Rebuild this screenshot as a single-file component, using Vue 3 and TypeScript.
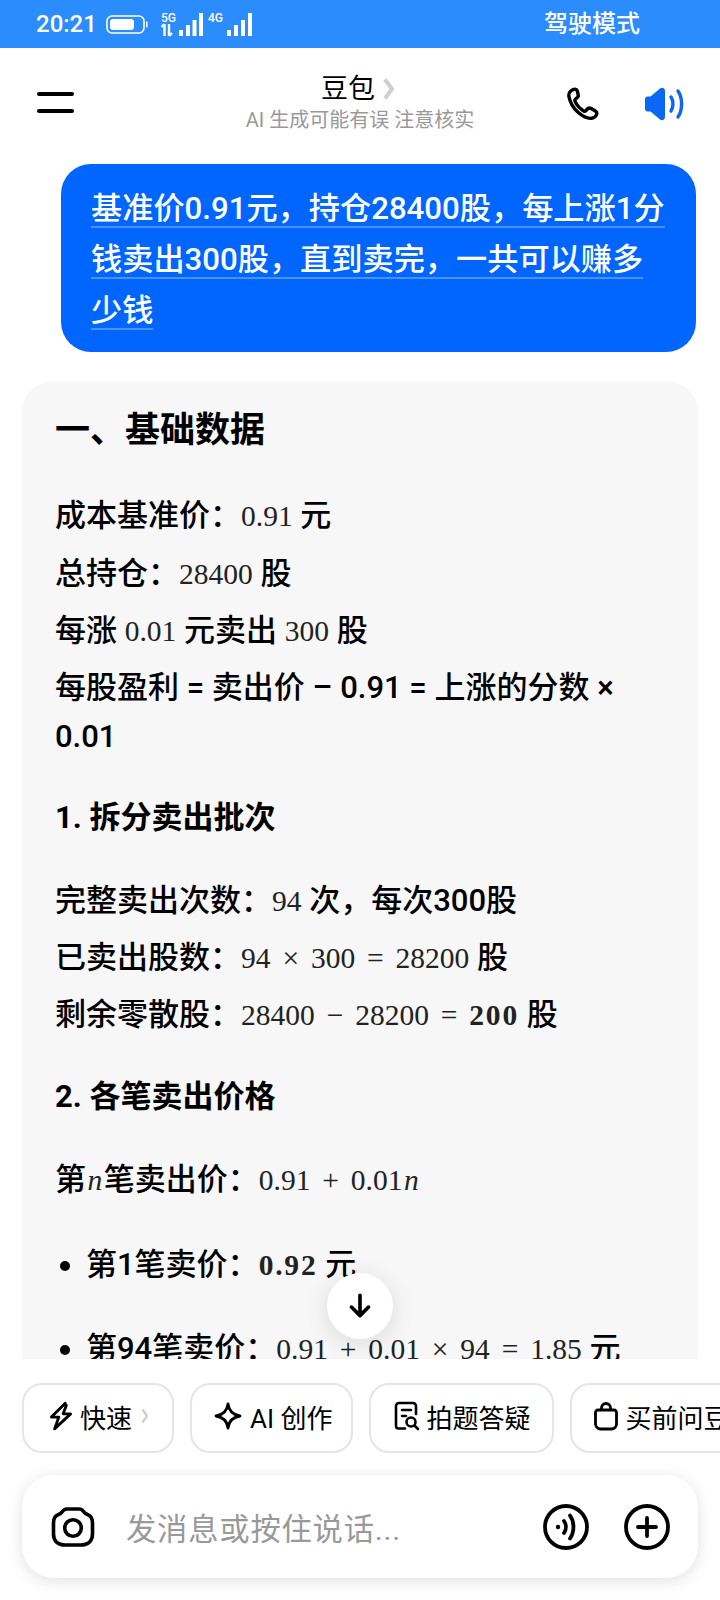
<script setup lang="ts">
interface Chip { label: string; icon: string; arrow?: boolean }
const chips: Chip[] = [
  { label: '快速', icon: 'bolt', arrow: true },
  { label: 'AI 创作', icon: 'star' },
  { label: '拍题答疑', icon: 'doc' },
  { label: '买前问豆包', icon: 'bag' },
]
</script>

<template>
  <div class="page">
    <div class="status">
      <span class="time">20:21</span>
      <svg class="battery" width="42" height="19" viewBox="0 0 42 19">
        <rect x="1" y="1" width="37" height="17" rx="5" fill="none" stroke="#fff" stroke-width="1.6" />
        <rect x="4" y="4" width="24" height="11" rx="3" fill="#fff" />
        <rect x="40" y="6.5" width="1.6" height="6" rx="0.8" fill="#fff" />
      </svg>
      <div class="sig">
        <span class="gen">5G</span>
        <svg width="46" height="24" viewBox="0 0 46 24">
          <path d="M3.500 11v12M3.500 11l-3 3M8 11v12M8 23l3-3" stroke="#fff" stroke-width="2.400" fill="none" />
          <rect x="18" y="17" width="4" height="6" fill="#fff" />
          <rect x="25" y="12" width="4" height="11" fill="#fff" />
          <rect x="31.500" y="7" width="4" height="16" fill="#fff" />
          <rect x="38" y="0" width="4" height="23" fill="#fff" />
        </svg>
      </div>
      <div class="sig sig2">
        <span class="gen">4G</span>
        <svg width="46" height="24" viewBox="0 0 46 24">
          <rect x="19" y="17" width="4" height="6" fill="#fff" />
          <rect x="26" y="12" width="4" height="11" fill="#fff" />
          <rect x="33" y="7" width="4" height="16" fill="#fff" />
          <rect x="40" y="0" width="4" height="23" fill="#fff" />
        </svg>
      </div>
      <span class="drive">驾驶模式</span>
    </div>

    <header class="head">
      <div class="burger"><i></i><i></i></div>
      <div class="title-box">
        <div class="title">豆包<svg width="12" height="24" viewBox="0 0 12 24"><path d="M2 2.500l7 9.500-7 9.500" fill="none" stroke="#cfcfcf" stroke-width="4" /></svg></div>
        <div class="sub">AI 生成可能有误 注意核实</div>
      </div>
      <div class="head-icons">
        <svg width="36" height="36" viewBox="0 0 24 24" fill="none" stroke="#000" stroke-width="2.300" stroke-linejoin="round">
          <path d="M6.500 2.200c-1.800.6-3.700 2.300-3.300 4.500.9 4.800 3.500 8.600 6.300 11 2.600 2.200 6.100 4.300 8.900 3.800 1.800-.3 3.300-1.800 3.500-3.200.1-.8-.3-1.300-1-1.700l-3.100-1.700c-.8-.4-1.400-.3-2 .3l-1.300 1.300c-.4.4-.9.400-1.400.1-2.600-1.600-4.700-4-5.800-6.500-.2-.5-.1-.9.300-1.300l1.300-1.100c.6-.5.800-1.100.5-1.900L8.900 3.300c-.4-1-1.300-1.400-2.400-1.100z" />
        </svg>
        <svg class="spk" width="44" height="36" viewBox="0 0 44 36" fill="#0b68f5">
          <path d="M2 13c0-1.500 1-2.500 2.500-2.500h3L17 2.500c2-1.600 5-.5 5 2.500v26c0 3-3 4-5 2.500l-9.500-8h-3C3 25.500 2 24.500 2 23z" />
          <path d="M28 11c2.600 4 2.600 10 0 14" fill="none" stroke="#0b68f5" stroke-width="3.400" stroke-linecap="round" />
          <path d="M35 5c4.800 7 4.800 19 0 26" fill="none" stroke="#0b68f5" stroke-width="3.400" stroke-linecap="round" />
        </svg>
      </div>
    </header>

    <main class="content">
      <div class="bubble"><span class="ul">基准价0.91元，持仓28400股，每上涨1分钱卖出300股，直到卖完，一共可以赚多少钱</span></div>
      <article class="card">
        <h2>一、基础数据</h2>
        <p class="line">成本基准价：<span class="m">0.91</span> 元</p>
        <p class="line tight">总持仓：<span class="m">28400</span> 股</p>
        <p class="line tight">每涨 <span class="m">0.01</span> 元卖出 <span class="m">300</span> 股</p>
        <p class="line">每股盈利 = 卖出价 – 0.91 = 上涨的分数 × 0.01</p>
        <h3>1. 拆分卖出批次</h3>
        <p class="line tight">完整卖出次数：<span class="m">94</span> 次，每次300股</p>
        <p class="line tight">已卖出股数：<span class="m">94 × 300 = 28200</span> 股</p>
        <p class="line">剩余零散股：<span class="m">28400 − 28200 = <b>200</b></span> 股</p>
        <h3 class="second">2. 各笔卖出价格</h3>
        <p class="line">第<span class="m"><i>n</i></span>笔卖出价：<span class="m">0.91 + 0.01<i>n</i></span></p>
        <ul>
          <li>第1笔卖价：<span class="m"><b>0.92</b></span> 元</li>
          <li>第94笔卖价：<span class="m">0.91 + 0.01 × 94 = 1.85</span> 元</li>
        </ul>
      </article>
      <button class="down" type="button" aria-label="scroll down">
        <svg width="30" height="30" viewBox="0 0 28 28" fill="none" stroke="#000" stroke-width="3.400" stroke-linecap="round" stroke-linejoin="round">
          <path d="M14 4v19M6 15l8 8 8-8" />
        </svg>
      </button>
    </main>

    <div class="chips">
      <div v-for="c in chips" :key="c.label" class="chip" :class="c.icon">
        <svg v-if="c.icon === 'bolt'" width="24" height="30" viewBox="1 1 22 28" fill="none" stroke="#000" stroke-width="2.600" stroke-linejoin="round" stroke-linecap="round">
          <path d="M16 3L3 16h7l-4 11 15-14h-7l3-8" />
        </svg>
        <svg v-else-if="c.icon === 'star'" width="30" height="30" viewBox="0 0 30 30" fill="none" stroke="#000" stroke-width="2.800" stroke-linejoin="round">
          <path d="M15 3c1 7 5 11 12 12-7 1-11 5-12 12-1-7-5-11-12-12 7-1 11-5 12-12z" />
        </svg>
        <svg v-else-if="c.icon === 'doc'" width="26" height="30" viewBox="0 0 26 30" fill="none" stroke="#000" stroke-width="2.600" stroke-linecap="round" stroke-linejoin="round">
          <path d="M22 13V5a3 3 0 0 0-3-3H5a3 3 0 0 0-3 3v20a2.500 2.500 0 0 0 2.500 2.500H11M8 9h9M8 15h4" />
          <circle cx="17" cy="21" r="4.500" />
          <path d="M21 25l3 3" />
        </svg>
        <svg v-else width="26" height="30" viewBox="0 0 26 30" fill="none" stroke="#000" stroke-width="2.800" stroke-linejoin="round" stroke-linecap="round">
          <path d="M5 9h16a2.500 2.500 0 0 1 2.500 2.500V23a5 5 0 0 1-5 5h-11a5 5 0 0 1-5-5V11.500A2.500 2.500 0 0 1 5 9zM8.500 9V7a4.500 4.500 0 0 1 9 0v2" />
        </svg>
        <span>{{ c.label }}</span>
        <svg v-if="c.arrow" class="chev" width="8" height="16" viewBox="0 0 8 16"><path d="M1.500 1.500l4.500 6.500-4.500 6.500" fill="none" stroke="#d0d0d0" stroke-width="2.400" /></svg>
      </div>
    </div>

    <div class="input">
      <svg width="46" height="46" viewBox="0 0 46 46" fill="none" stroke="#000" stroke-width="3.600">
        <path d="M17 5h12c2.500 0 3.800 1.200 5 3 1 1.500 2 2 3.500 2.500 3 1 5 4.500 5 8.500v11c0 7-4.500 11-11.500 11H15C8 41 3.500 37 3.500 30V19c0-4 2-7.500 5-8.500C10 10 11 9.500 12 8c1.200-1.800 2.500-3 5-3z" />
        <circle cx="23" cy="24" r="8.300" />
      </svg>
      <span class="ph">发消息或按住说话...</span>
      <svg class="round first" width="46" height="46" viewBox="0 0 46 46" fill="none" stroke="#000" stroke-width="3.800" stroke-linecap="round">
        <circle cx="23" cy="23" r="21" />
        <circle cx="15" cy="23" r="2.200" fill="#000" stroke="none" />
        <path d="M21 17c2.500 3.500 2.500 8.500 0 12" />
        <path d="M27 11.500c4.600 6.500 4.600 16.500 0 23" />
      </svg>
      <svg class="round" width="46" height="46" viewBox="0 0 46 46" fill="none" stroke="#000" stroke-width="3.800" stroke-linecap="round">
        <circle cx="23" cy="23" r="21" />
        <path d="M23 14v18M14 23h18" />
      </svg>
    </div>
  </div>
</template>

<style>
body { margin: 0; background: #fff; }
</style>

<style scoped>
.page {
  width: 720px;
  height: 1600px;
  overflow: hidden;
  display: flex;
  flex-direction: column;
  background: #fff;
  color: #000;
  font-family: Roboto, "Noto Sans CJK SC", sans-serif;
}
.status {
  height: 48px;
  flex: none;
  background: #2b8cfe;
  color: #fff;
  display: flex;
  align-items: center;
  padding-left: 36px;
  padding-right: 80px;
}
.time { font-size: 24px; font-weight: 500; width: 70px; }
.battery { flex: none; }
.sig { position: relative; display: flex; margin-left: 13px; margin-top: 2px; }
.sig2 { margin-left: 1px; }
.sig svg { display: block; }
.gen { position: absolute; left: 0; top: -1px; font-size: 12px; line-height: 12px; font-weight: 500; }
.drive { margin-left: auto; font-size: 24px; line-height: 30px; font-weight: 500; }

.head {
  height: 107px;
  flex: none;
  display: grid;
  grid-template-columns: 1fr auto 1fr;
  align-items: center;
  padding: 0 33px 0 37px;
}
.burger { width: 37px; display: flex; flex-direction: column; gap: 13px; margin-top: 2px; }
.burger i { display: block; height: 4px; background: #000; border-radius: 2px; }
.title-box {
  display: flex;
  flex-direction: column;
  align-items: center;
  padding-right: 4px;
}
.title { font-size: 27px; line-height: 36px; display: flex; align-items: center; gap: 8px; margin-right: 4px; }
.sub { font-size: 20px; line-height: 26px; color: #999; }
.head-icons { display: flex; align-items: center; gap: 43px; justify-self: end; margin-top: 4px; }

.content {
  flex: 1;
  min-height: 0;
  overflow: hidden;
  position: relative;
  padding: 9px 22px 0;
  display: flex;
  flex-direction: column;
  align-items: stretch;
}
.bubble {
  margin-left: 39px;
  margin-right: 2px;
  background: #0066ff;
  color: #fff;
  border-radius: 30px;
  padding: 19px 30px 16px;
  font-size: 31.200px;
  line-height: 51px;
  font-weight: 500;
  flex: none;
}
.ul {
  text-decoration: underline;
  text-decoration-color: #4b92ff;
  text-decoration-thickness: 1.500px;
  text-underline-offset: 7px;
}
.card {
  flex: none;
  margin-top: 30px;
  width: 676px;
  box-sizing: border-box;
  background: #f7f7f7;
  border-radius: 30px;
  padding: 24px 30px 60px 33px;
  font-size: 31px;
  line-height: 49px;
  font-weight: 500;
}
h2 { margin: 0 0 35px; font-size: 35px; line-height: 50px; font-weight: 700; }
h3 { margin: 32px 0 33px; font-size: 31px; line-height: 50px; font-weight: 700; }
h3.second { margin: 32px 0 33px; }
.line { margin: 0 0 8px; }
.line.tight { margin-bottom: 7px; }
.m {
  font-family: "Liberation Serif", serif;
  font-weight: 400;
  font-size: 29.500px;
  color: #222;
  word-spacing: 4.500px;
}
.m i { margin: 0 1.500px; }
.m b { font-weight: 700; letter-spacing: 1.800px; }
ul { margin: 35px 0 0; padding: 0 0 0 31px; }
li { margin-bottom: 34px; }
.down {
  position: absolute;
  left: 327px;
  top: 1118px;
  width: 66px;
  height: 66px;
  border: none;
  border-radius: 50%;
  padding: 0;
  background: #fff;
  box-shadow: 0 4px 24px rgba(0, 0, 0, 0.12);
  display: flex;
  align-items: center;
  justify-content: center;
}

.chips {
  flex: none;
  height: 116px;
  padding: 24px 0 0 22px;
  box-sizing: border-box;
  display: flex;
  gap: 16px;
  overflow: hidden;
}
.chip {
  flex: none;
  height: 70px;
  box-sizing: border-box;
  border: 2px solid #e5e5e5;
  border-radius: 20px;
  padding: 0 21px 4px;
  display: flex;
  align-items: center;
  gap: 7px;
  font-size: 26px;
  font-weight: 400;
}
.chip.bolt { padding: 0 23px 4px 25px; }
.chip.star { padding-right: 18px; }
.chip.doc { padding-left: 23px; }
.chev { margin-left: 2px; }
.input {
  flex: none;
  margin: 0 22px 22px;
  height: 103px;
  box-sizing: border-box;
  background: #fff;
  border-radius: 32px;
  box-shadow: 0 3px 16px rgba(0, 0, 0, 0.12);
  display: flex;
  align-items: center;
  padding: 0 28px;
}
.ph { margin-left: 30px; font-size: 30.300px; letter-spacing: 0.800px; color: #999; flex: 1; }
.round { flex: none; }
.round.first { margin-right: 35px; }
</style>
